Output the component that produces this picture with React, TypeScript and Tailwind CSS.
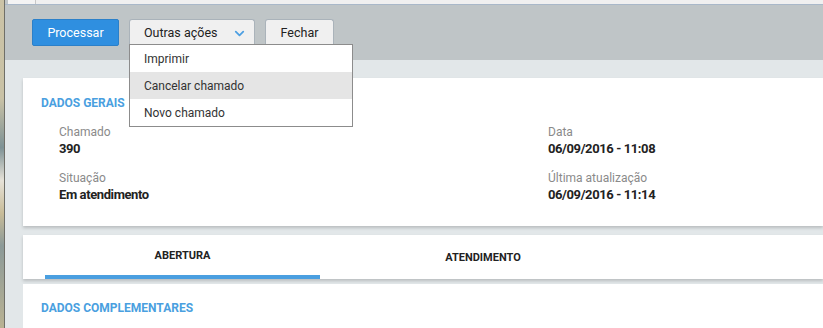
import { ChevronDown } from "lucide-react";

const fields = [
  [
    { label: "Chamado", value: "390" },
    { label: "Data", value: "06/09/2016 - 11:08" },
  ],
  [
    { label: "Situação", value: "Em atendimento" },
    { label: "Última atualização", value: "06/09/2016 - 11:14" },
  ],
];

const menuItems = ["Imprimir", "Cancelar chamado", "Novo chamado"];

function Field({ label, value }: { label: string; value: string }) {
  return (
    <div className="flex flex-col">
      <span className="text-[12px] leading-[14px] text-[#8a8a8a]">{label}</span>
      <span className="mt-[2px] text-[13px] leading-[16px] font-bold tracking-[-0.4px] text-[#222]">{value}</span>
    </div>
  );
}

export default function App() {
  return (
    <div
      className="flex h-[328px] w-[823px] overflow-hidden"
      style={{ fontFamily: "Roboto, 'Liberation Sans', sans-serif" }}
    >
      {/* Desktop edge */}
      <div className="w-[4px] shrink-0 bg-[linear-gradient(180deg,#cbc3a6_0%,#c9c2a6_30%,#7e9295_45%,#e6e2d8_55%,#c8bc98_65%,#8c9a98_75%,#b9b293_100%)]" />
      <div className="w-[1px] shrink-0 bg-[#6f6f68]" />

      {/* Window */}
      <div className="flex min-w-0 flex-1 flex-col bg-[#e2e7e9]">
        <div className="flex h-[4px] shrink-0 bg-[#bfc5c7]">
          <div className="ml-[3px] w-[28px] border-r border-[#c8c8c8] bg-[#f4f4f4]" />
          <div className="flex-1 bg-[#f0f0f0]" />
        </div>
        <div className="h-[1px] shrink-0 bg-[#a9b8c9]" />

        {/* Toolbar */}
        <div className="relative z-10 flex h-[55px] shrink-0 items-start gap-[10px] bg-[#bfc5c7] pl-[27px] pt-[14px]">
          <button className="h-[27px] w-[87px] rounded-[2px] border border-[#2b80c9] bg-[#2f8fe0] pt-[1px] text-[12.5px] text-white">
            Processar
          </button>
          <div className="relative">
            <button className="flex h-[27px] w-[126px] items-center justify-between rounded-t-[3px] border border-b-0 border-[#aab3ba] bg-[#f0f0f0] pl-[14px] pr-[7px] pt-[1px] text-[12.5px] text-[#222]">
              <span>Outras ações</span>
              <ChevronDown size={15} strokeWidth={2.8} className="text-[#4c9fe2]" />
            </button>
            <div className="absolute left-0 top-[25px] w-[224px] border border-[#8c8c8c] bg-white text-[12px] text-[#333]">
              {menuItems.map((item, i) => (
                <div
                  key={item}
                  className={`flex h-[27px] items-center pl-[14px] ${i === 1 ? "bg-[#e5e5e5]" : ""}`}
                >
                  {item}
                </div>
              ))}
            </div>
          </div>
          <button className="h-[27px] w-[69px] rounded-t-[3px] border border-b-0 border-[#aab3ba] bg-[#f0f0f0] pt-[1px] text-[12.5px] text-[#222]">
            Fechar
          </button>
        </div>

        {/* Content */}
        <div className="flex flex-col pl-[18px] pt-[18px]">
          <div className="h-[148px] bg-white pl-[18px] pt-[18px] shadow-[0_2px_3px_rgba(0,0,0,0.18)]">
            <h2 className="text-[12px] leading-[14px] font-bold text-[#4a9fe0]">DADOS GERAIS</h2>
            <div className="mt-[15px] flex flex-col gap-[14px] pl-[18px]">
              {fields.map((row, i) => (
                <div key={i} className="grid grid-cols-[489px_1fr]">
                  {row.map((f) => (
                    <Field key={f.label} {...f} />
                  ))}
                </div>
              ))}
            </div>
          </div>

          <div className="mt-[9px] flex h-[44px] bg-white pl-[22px] shadow-[0_2px_3px_rgba(0,0,0,0.18)]">
            <div className="flex w-[275px] items-center justify-center border-b-4 border-[#4a9fe0] pt-[2px] text-[11px] font-bold text-[#222]">
              ABERTURA
            </div>
            <div className="flex w-[326px] items-center justify-center pt-[2px] text-[11px] font-bold text-[#222]">
              ATENDIMENTO
            </div>
          </div>

          <div className="mt-[5px] h-[60px] bg-white pl-[18px] pt-[17px]">
            <h2 className="text-[12px] leading-[14px] font-bold text-[#4a9fe0]">DADOS COMPLEMENTARES</h2>
          </div>
        </div>
      </div>
    </div>
  );
}
